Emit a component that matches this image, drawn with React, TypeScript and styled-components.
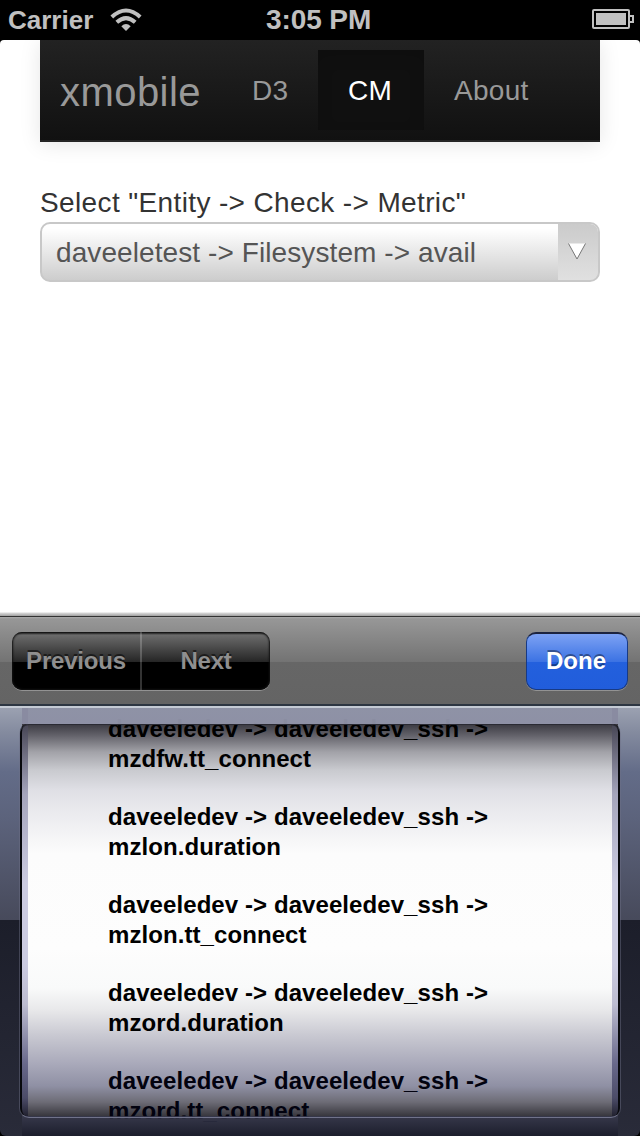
import React from "react";
import styled, { createGlobalStyle, css } from "styled-components";

const Global = createGlobalStyle`
  * { box-sizing: border-box; }
  body { margin: 0; background: #000; font-family: "Liberation Sans", Arial, sans-serif; }
`;

const Phone = styled.div`
  width: 640px;
  height: 1136px;
  display: flex;
  flex-direction: column;
  overflow: hidden;
  background: #000;
`;

const StatusBar = styled.header`
  height: 40px;
  flex: none;
  display: grid;
  grid-template-columns: 258px auto 1fr;
  align-items: center;
  padding: 0 6px 0 8px;
  color: #c0c0c0;
  font-weight: 700;
`;

const Carrier = styled.div`
  display: flex;
  align-items: center;
  gap: 17px;
  font-size: 26px;
  line-height: 40px;
`;

const Clock = styled.div`
  font-size: 28px;
  line-height: 38px;
  letter-spacing: -0.1px;
`;

const BatterySlot = styled.div`
  display: flex;
  justify-content: flex-end;
  padding-bottom: 2px;
`;

const WebView = styled.main`
  height: 576px;
  flex: none;
  overflow: hidden;
  padding: 0 40px;
  background: linear-gradient(#fff 572px, #d8d8d8 573px, #a0a0a0);
  border-radius: 4px 4px 0 0;
`;

const NavBar = styled.nav`
  height: 102px;
  display: flex;
  align-items: center;
  padding-left: 20px;
  background: linear-gradient(#222, #111);
  border-bottom: 2px solid #252525;
  box-shadow: 0 2px 20px rgba(0, 0, 0, 0.1);
`;

const Brand = styled.a`
  width: 162px;
  padding-top: 5px;
  font-size: 40px;
  letter-spacing: 0.45px;
  color: #999;
`;

const NavItem = styled.a<{ $active?: boolean }>`
  height: 80px;
  padding: 0 29.5px 0 30px;
  line-height: 82px;
  font-size: 28px;
  letter-spacing: 0.3px;
  color: ${(p) => (p.$active ? "#fff" : "#999")};
  ${(p) =>
    p.$active &&
    css`
      min-width: 106px;
      background: #101010;
      box-shadow: inset 0 6px 16px rgba(0, 0, 0, 0.125);
    `}
`;

const Field = styled.div`
  padding-top: 44px;
`;

const Label = styled.label`
  display: block;
  height: 36px;
  line-height: 34px;
  font-size: 28px;
  letter-spacing: 0.37px;
  color: #333;
  white-space: nowrap;
`;

const Select = styled.div`
  height: 60px;
  display: flex;
  border: 2px solid #c8c8c8;
  border-radius: 10px;
  overflow: hidden;
  background: linear-gradient(#fff 8%, #cdcdcd);
`;

const SelectValue = styled.span`
  flex: 1;
  padding-left: 14px;
  line-height: 58px;
  font-size: 28px;
  letter-spacing: 0.09px;
  color: #555;
  white-space: nowrap;
`;

const SelectArrow = styled.span`
  width: 40px;
  display: flex;
  align-items: center;
  justify-content: center;
  padding: 0 3px 2px 0;
  background: linear-gradient(#cbcbcb, #e0e0e0);
`;

const Toolbar = styled.div`
  height: 90px;
  flex: none;
  display: flex;
  align-items: center;
  justify-content: space-between;
  padding: 0 12px;
  border-top: 1px solid #333;
  border-bottom: 2px solid #2d3642;
  background: linear-gradient(#aaa, #979797 2px, #737373 45px, #666 45px, #646464);
`;

const buttonFrame = css`
  height: 58px;
  border-radius: 10px;
  font-size: 24px;
  font-weight: 700;
  line-height: 56px;
  text-align: center;
`;

const Segments = styled.div`
  ${buttonFrame}
  display: flex;
  width: 258px;
  overflow: hidden;
  background: linear-gradient(#1c1c1c, #6b6b6b 3px, #252525 30px, #000 30px);
  box-shadow: inset 0 0 2px 1px #111, 0 1px 0 rgba(255, 255, 255, 0.3);
`;

const Segment = styled.button`
  flex: 1;
  padding: 0;
  border: 0;
  background: none;
  font: inherit;
  letter-spacing: -0.2px;
  color: #8f8f8f;
  text-shadow: 0 -2px 0 rgba(0, 0, 0, 0.5);

  & + & {
    border-left: 2px solid rgba(255, 255, 255, 0.2);
  }
`;

const DoneButton = styled.button`
  ${buttonFrame}
  width: 102px;
  padding: 0 2px 0 0;
  font-family: inherit;
  border: 1px solid #173a86;
  border-top: 2px solid #1c2440;
  line-height: 52px;
  color: #fff;
  text-shadow: 0 -2px 0 rgba(0, 0, 0, 0.4);
  background: linear-gradient(#7da2f4, #3b72e3 28px, #2360dd 28px, #215ddb);
  box-shadow: 0 1px 0 rgba(255, 255, 255, 0.3);
`;

const Picker = styled.section`
  position: relative;
  height: 430px;
  flex: none;
  padding: 0 20px;
  overflow: hidden;
  border-top: 2px solid #c5cbd5;
  border-radius: 0 0 6px 6px;
  background: linear-gradient(#9ba1b1, #848b9f 24px, #636c88 64px, #5c637c 110px, #474a5b 212px, #1c1e2a 212px, #292b39);
`;

const Wheel = styled.div`
  height: 428px;
  margin: 0 2px;
  overflow: hidden;
  background: linear-gradient(
    #3a3941 16px, #65646c 28px, #a2a2a8 44px, #c9cacf 62px, #dfdfe5 82px, #eaeaee 104px,
    #fcfcfc 146px, #fdfdfd 240px, #f9fafa 280px, #e8e8ea 302px, #c8c8d1 328px,
    #a9a9ba 356px, #8f90a4 378px, #6d6c76 394px, #38373e 408px
  );
`;

const WheelRow = styled.div`
  height: 88px;
  padding: 14px 0 0 86px;
  font-size: 24px;
  font-weight: 700;
  line-height: 30px;
  letter-spacing: 0.08px;
  color: #000;

  &:first-child {
    margin-top: -8px;
  }
  &:last-child {
    color: #02020f;
  }
`;

const Edge = styled.i<{ $side: "left" | "right" }>`
  position: absolute;
  top: 16px;
  ${(p) => p.$side}: 20px;
  width: 8px;
  height: 393px;
  border-${(p) => p.$side}: 2px solid #08090d;
  border-top-${(p) => p.$side}-radius: 10px;
  border-bottom-${(p) => p.$side}-radius: 10px;
  background: linear-gradient(#464554, #a4a4bb 70px, #cbcbe0 160px, #cbcbe0 240px, #bcbcd0 280px, #68688a 340px, #4c4c68 374px, #1f1f2c);
`;

const FrameCap = styled.i<{ $at: "top" | "bottom" }>`
  position: absolute;
  left: 22px;
  right: 22px;
  ${(p) =>
    p.$at === "top"
      ? css`
          top: 0;
          height: 16px;
          background: linear-gradient(rgba(146, 150, 170, 0.96), rgba(149, 152, 174, 0.92));
          box-shadow: inset 6px 0 0 rgba(130, 130, 155, 0.4), inset -6px 0 0 rgba(130, 130, 155, 0.4);
        `
      : css`
          bottom: 0;
          height: 20px;
          background: linear-gradient(rgba(54, 56, 77, 0.8), #1c1e2c);
        `}
`;

const Bezel = styled.i`
  position: absolute;
  top: 16px;
  left: 19px;
  right: 19px;
  height: 394px;
  border-radius: 10px;
  border: 1px solid rgba(110, 112, 135, 0.45);
  border-top: 1px solid #2a2a33;
  border-bottom: 1px solid #70728a;
`;

const metrics = [
  "mzdfw.tt_connect",
  "mzlon.duration",
  "mzlon.tt_connect",
  "mzord.duration",
  "mzord.tt_connect",
];

const WifiIcon = () => (
  <svg width="32" height="24" viewBox="0 0 32 24" fill="none" stroke="#c0c0c0" strokeWidth="4">
    <path d="M1.800 9Q16-4 30.200 9" />
    <path d="M6.800 14.300Q16 6 25.200 14.300" />
    <path d="M11.300 18.300Q16 13.800 20.700 18.300L16 23z" fill="#c0c0c0" stroke="none" />
  </svg>
);

const BatteryIcon = () => (
  <svg width="42" height="20" viewBox="0 0 42 20" fill="none" stroke="#c0c0c0" strokeWidth="2">
    <rect x="1" y="1" width="36" height="18" rx="1" />
    <rect x="4" y="4" width="30" height="12" fill="#c0c0c0" stroke="none" />
    <path d="M38 7h3v6h-3" />
  </svg>
);

export default function App() {
  return (
    <Phone>
      <Global />
      <StatusBar>
        <Carrier>
          Carrier
          <WifiIcon />
        </Carrier>
        <Clock>3:05 PM</Clock>
        <BatterySlot>
          <BatteryIcon />
        </BatterySlot>
      </StatusBar>
      <WebView>
        <NavBar>
          <Brand>xmobile</Brand>
          <NavItem>D3</NavItem>
          <NavItem $active>CM</NavItem>
          <NavItem>About</NavItem>
        </NavBar>
        <Field>
          <Label>Select "Entity -&gt; Check -&gt; Metric"</Label>
          <Select>
            <SelectValue>daveeletest -&gt; Filesystem -&gt; avail</SelectValue>
            <SelectArrow>
              <svg width="18" height="17" viewBox="0 0 18 17">
                <path d="M.5.500h17L9 16z" fill="#fff" />
                <path d="M.5.500L9 16 17.500.500" fill="none" stroke="#777" />
              </svg>
            </SelectArrow>
          </Select>
        </Field>
      </WebView>
      <Toolbar>
        <Segments>
          <Segment>Previous</Segment>
          <Segment>Next</Segment>
        </Segments>
        <DoneButton>Done</DoneButton>
      </Toolbar>
      <Picker>
        <Wheel>
          {metrics.map((m) => (
            <WheelRow key={m}>
              daveeledev -&gt; daveeledev_ssh -&gt;
              <br />
              {m}
            </WheelRow>
          ))}
        </Wheel>
        <Edge $side="left" />
        <Edge $side="right" />
        <FrameCap $at="top" />
        <FrameCap $at="bottom" />
        <Bezel />
      </Picker>
    </Phone>
  );
}
